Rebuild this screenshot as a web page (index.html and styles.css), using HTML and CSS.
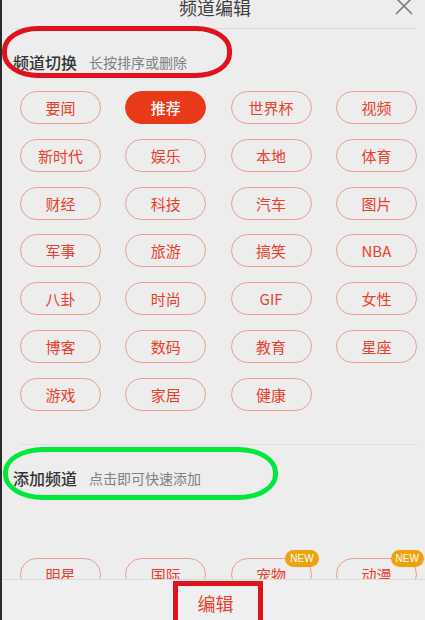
FILE: index.html
```html
<!DOCTYPE html>
<html lang="zh-CN">
<head>
    <meta charset="UTF-8">
    <meta name="viewport" content="width=device-width, initial-scale=1.0">
    <title>频道编辑</title>
    <link rel="stylesheet" href="styles.css">
</head>
<body>

<div class="page">
    <div class="main">
        <div class="header">
            <h1 class="title">频道编辑</h1>
            <svg class="close" width="18" height="16" viewBox="0 0 18 16">
                <path d="M1 -2 L17 14 M17 -2 L1 14" stroke="#7a7a7a" stroke-width="1.6" fill="none"/>
            </svg>
        </div>

        <div class="section-head first">
            <span class="section-title">频道切换</span>
            <span class="section-tip">长按排序或删除</span>
            <div class="mark mark-red"></div>
        </div>

        <div class="channels" id="myChannels"></div>

        <div class="divider"></div>

        <div class="section-head second">
            <span class="section-title">添加频道</span>
            <span class="section-tip">点击即可快速添加</span>
            <div class="mark mark-green"></div>
        </div>

        <div class="channels more" id="moreChannels"></div>
    </div>

    <div class="footer">
        <span class="edit-btn">编辑</span>
        <div class="mark-box"></div>
    </div>
</div>

<script>
const myChannels = ['要闻', '推荐', '世界杯', '视频', '新时代', '娱乐', '本地', '体育',
    '财经', '科技', '汽车', '图片', '军事', '旅游', '搞笑', 'NBA',
    '八卦', '时尚', 'GIF', '女性', '博客', '数码', '教育', '星座',
    '游戏', '家居', '健康'];
const moreChannels = [
    { name: '明星' }, { name: '国际' },
    { name: '宠物', isNew: true }, { name: '动漫', isNew: true }
];

function renderChannels() {
    const mine = document.getElementById('myChannels');
    myChannels.forEach(name => {
        const btn = document.createElement('div');
        btn.className = name === '推荐' ? 'channel active' : 'channel';
        btn.textContent = name;
        mine.appendChild(btn);
    });

    const more = document.getElementById('moreChannels');
    moreChannels.forEach(item => {
        const btn = document.createElement('div');
        btn.className = 'channel';
        btn.textContent = item.name;
        if (item.isNew) {
            const badge = document.createElement('span');
            badge.className = 'badge';
            badge.textContent = 'NEW';
            btn.appendChild(badge);
        }
        more.appendChild(btn);
    });
}

renderChannels();
</script>

</body>
</html>
```

FILE: styles.css
```css
body {
    margin: 0;
    font-family: "Noto Sans CJK SC", "Noto Sans", sans-serif;
    background-color: #ededed;
}

.page {
    width: 425px;
    height: 620px;
    overflow: hidden;
    box-sizing: border-box;
    border-left: 2px solid #2a2a2a;
}

.main {
    height: 579px;
    overflow: hidden;
}

.header {
    position: relative;
    display: flow-root;
    height: 28px;
    margin: 0 10px 0 13px;
    border-bottom: 1px solid #dadada;
}

.title {
    margin: -5px 0 0;
    text-align: center;
    font-size: 18px;
    line-height: 24px;
    font-weight: normal;
    color: #3e3e3e;
}

.close {
    position: absolute;
    right: 2px;
    top: 0;
}

.section-head {
    position: relative;
    display: flex;
    align-items: center;
    height: 24px;
    padding-left: 11px;
}

.section-head.first {
    margin-top: 21px;
}

.section-head.second {
    margin-top: 21px;
}

.section-title {
    font-size: 16px;
    font-weight: 500;
    color: #333;
}

.section-tip {
    margin-left: 12px;
    font-size: 14px;
    color: #808080;
}

.mark {
    position: absolute;
    box-sizing: border-box;
    border-width: 5px;
    border-style: solid;
}

.mark-red {
    left: 0;
    top: -24px;
    width: 230px;
    height: 52px;
    border-color: #e0131c;
    border-radius: 36px / 24px;
}

.mark-green {
    left: 1px;
    top: -19px;
    width: 275px;
    height: 53px;
    border-color: #00e83a;
    border-radius: 40px / 25px;
}

.channels {
    display: grid;
    grid-template-columns: repeat(4, 81px);
    column-gap: 24.3px;
    row-gap: 14.8px;
    margin: 17px 0 0 18px;
}

.channels.more {
    margin-top: 68px;
}

.channel {
    position: relative;
    height: 33px;
    box-sizing: border-box;
    border: 1px solid #e99c92;
    border-radius: 17px;
    display: flex;
    align-items: center;
    justify-content: center;
    font-size: 15px;
    color: #e8412b;
}

.channel.active {
    background-color: #e83a18;
    border-color: #e83a18;
    color: #fff;
    font-weight: 500;
}

.badge {
    position: absolute;
    top: -9px;
    right: -8px;
    height: 17px;
    padding: 0 5px;
    border-radius: 9px;
    background-color: #eea20d;
    color: #fff;
    font-family: "Liberation Sans", Arial, sans-serif;
    font-size: 10px;
    line-height: 17px;
}

.divider {
    height: 1px;
    margin: 33px 8px 0 18px;
    background-color: #e2e2e2;
}

.footer {
    position: relative;
    height: 41px;
    box-sizing: border-box;
    border-top: 1px solid #dcdcdc;
    background-color: #efefef;
    display: flex;
    justify-content: center;
    align-items: center;
}

.edit-btn {
    margin: 6px 0 0 4px;
    font-size: 18px;
    color: #e8412b;
}

.mark-box {
    position: absolute;
    left: 171px;
    top: 1px;
    width: 90px;
    height: 45px;
    box-sizing: border-box;
    border: 5px solid #e0131c;
}
```
